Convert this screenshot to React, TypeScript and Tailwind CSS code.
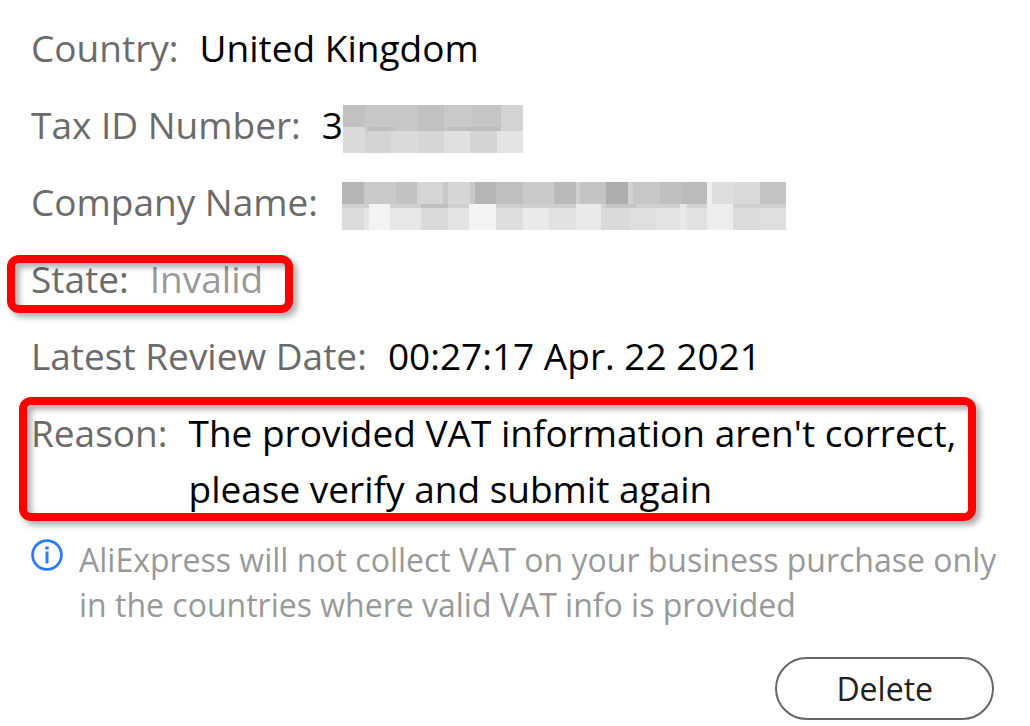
import type { ReactNode } from "react";

type Cell = [x: number, y: number, width: number, height: number, fill: string];

const taxCells: Cell[] = [
  [0, 0, 22, 22, "#c1c1c1"],
  [22, 0, 53, 26, "#c7c7c7"],
  [75, 0, 26, 26, "#c1c1c1"],
  [101, 0, 28, 26, "#c9c9c9"],
  [129, 0, 29, 26, "#c5c5c5"],
  [158, 0, 22, 26, "#d3d3d3"],
  [26, 22, 26, 4, "#bebebe"],
  [104, 22, 54, 4, "#bebebe"],
  [0, 22, 22, 26, "#dadada"],
  [22, 26, 26, 22, "#d3d3d3"],
  [48, 26, 27, 22, "#dadada"],
  [75, 26, 26, 22, "#d6d6d6"],
  [101, 26, 26, 22, "#e0e0e0"],
  [127, 26, 27, 22, "#d4d4d4"],
  [154, 26, 26, 22, "#e4e4e4"],
];

const companyCells: Cell[] = [
  [0, 0, 22, 22, "#b5b5b5"],
  [22, 0, 32, 22, "#c9c9c9"],
  [54, 0, 21, 22, "#c2c2c2"],
  [75, 0, 26, 22, "#d5d5d5"],
  [101, 0, 5, 26, "#c8c8c8"],
  [106, 0, 22, 22, "#d6d6d6"],
  [128, 0, 5, 22, "#c8c8c8"],
  [133, 0, 21, 22, "#b5b5b5"],
  [154, 0, 27, 22, "#bfbfbf"],
  [181, 0, 31, 22, "#cacaca"],
  [212, 0, 22, 22, "#bababa"],
  [234, 0, 4, 22, "#d0d0d0"],
  [238, 0, 26, 22, "#c4c4c4"],
  [264, 0, 22, 22, "#adadad"],
  [286, 0, 5, 22, "#d2d2d2"],
  [291, 0, 27, 22, "#c7c7c7"],
  [318, 0, 22, 22, "#c0c0c0"],
  [340, 0, 25, 22, "#bbbbbb"],
  [365, 0, 5, 22, "#efefef"],
  [370, 0, 22, 22, "#dddddd"],
  [392, 0, 26, 22, "#d9d9d9"],
  [418, 0, 26, 22, "#c3c3c3"],
  [0, 22, 127, 4, "#d0d0d0"],
  [154, 22, 80, 4, "#cfcfcf"],
  [238, 22, 206, 4, "#d1d1d1"],
  [79, 22, 27, 4, "#c0c0c0"],
  [264, 22, 30, 4, "#c5c5c5"],
  [0, 26, 22, 22, "#dcdcdc"],
  [22, 26, 5, 22, "#e6e6e6"],
  [27, 22, 21, 26, "#f3f3f3"],
  [48, 26, 31, 22, "#e7e7e7"],
  [79, 26, 27, 22, "#dadada"],
  [106, 26, 21, 22, "#e3e3e3"],
  [127, 22, 27, 26, "#f3f3f3"],
  [154, 26, 27, 22, "#dddddd"],
  [181, 26, 26, 22, "#eaeaea"],
  [207, 26, 27, 22, "#e2e2e2"],
  [234, 22, 25, 26, "#eaeaea"],
  [259, 26, 29, 22, "#dadada"],
  [288, 26, 26, 22, "#dfdfdf"],
  [314, 26, 24, 22, "#e3e3e3"],
  [338, 22, 7, 26, "#e8e8e8"],
  [345, 26, 20, 22, "#e1e1e1"],
  [365, 22, 26, 26, "#ededed"],
  [391, 26, 27, 22, "#dbdbdb"],
  [418, 26, 26, 22, "#dfdfdf"],
];

const Mosaic = ({ width, cells }: { width: number; cells: Cell[] }) => (
  <svg
    width={width}
    height="48"
    shapeRendering="crispEdges"
    className="mt-2 shrink-0"
    role="img"
    aria-label="Hidden value"
  >
    {cells.map(([x, y, w, h, fill]) => (
      <rect key={`${x}-${y}`} x={x} y={y} width={w} height={h} fill={fill} />
    ))}
  </svg>
);

const Row = ({ label, children }: { label: string; children: ReactNode }) => (
  <div className="flex gap-[21px]">
    <dt className="shrink-0 text-[#6b6b6b]">{label}:</dt>
    <dd className="flex items-center">{children}</dd>
  </div>
);

const frame =
  "pointer-events-none absolute rounded-xl border-8 border-[#ff0000] drop-shadow-[4px_4px_3px_rgba(0,0,0,0.35)]";

const App = () => (
  <main className="bg-white pt-5 pr-8 pb-1 pl-[31px] font-['Open_Sans',sans-serif]">
    <dl className="flex flex-col gap-[21px] text-[37px] leading-[56px] text-black">
      <Row label="Country">United Kingdom</Row>
      <Row label="Tax ID Number">
        3<Mosaic width={180} cells={taxCells} />
      </Row>
      <div className="flex gap-6">
        <dt className="shrink-0 text-[#6b6b6b]">Company Name:</dt>
        <dd className="flex items-end">
          <Mosaic width={444} cells={companyCells} />
        </dd>
      </div>
      <div className="relative self-start">
        <Row label="State">
          <span className="text-[#999999]">Invalid</span>
        </Row>
        <div className={`${frame} -right-[30px] -bottom-1.5 -left-6 top-1`} />
      </div>
      <Row label="Latest Review Date">00:27:17 Apr. 22 2021</Row>
      <div className="relative self-start">
        <Row label="Reason">
          The provided VAT information aren't correct,
          <br />
          please verify and submit again
        </Row>
        <div className={`${frame} -right-5 -bottom-1 -left-3 -top-2`} />
      </div>
    </dl>
    <div className="mt-5 flex gap-4 text-[32px] leading-[45px] text-[#999999]">
      <svg
        width="32"
        height="32"
        viewBox="0 0 32 32"
        fill="none"
        stroke="#2e7cf0"
        className="mt-0.5 shrink-0"
        aria-hidden="true"
      >
        <circle cx="16" cy="16" r="14.4" strokeWidth="2.8" />
        <path d="M16 12.5v12" strokeWidth="3" />
        <path d="M16 7.5v3" strokeWidth="3.4" />
      </svg>
      <p>
        AliExpress will not collect VAT on your business purchase only in the
        countries where valid VAT info is provided
      </p>
    </div>
    <div className="mt-[30px] flex justify-end pr-1">
      <button
        type="button"
        className="rounded-full border-2 border-[#666666] px-[59px] py-2 text-[32px] leading-[43px] text-[#222222]"
      >
        Delete
      </button>
    </div>
  </main>
);

export default App;
